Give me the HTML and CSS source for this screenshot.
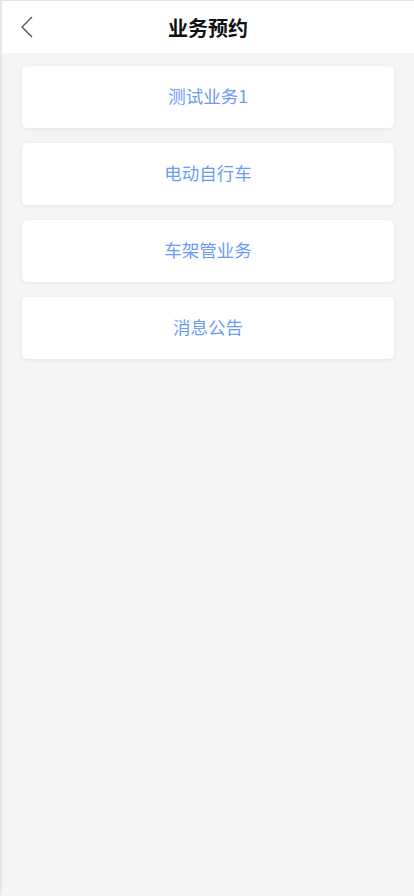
FILE: index.html
```html
<!DOCTYPE html>
<html lang="zh-CN">
<head>
    <meta charset="UTF-8">
    <meta name="viewport" content="width=device-width, initial-scale=1.0">
    <title>业务预约</title>
    <link rel="stylesheet" href="styles.css">
</head>
<body>

    <div class="page">
        <div class="header">
            <span class="back">
                <svg width="14" height="22" viewBox="0 0 14 22">
                    <path d="M12 1 L2 11 L12 21" fill="none" stroke="#555" stroke-width="1.4"/>
                </svg>
            </span>
            <h1>业务预约</h1>
        </div>

        <div class="list">
            <div class="card">测试业务1</div>
            <div class="card">电动自行车</div>
            <div class="card">车架管业务</div>
            <div class="card">消息公告</div>
        </div>
    </div>

</body>
</html>
```

FILE: styles.css
```css
body {
    margin: 0;
    padding: 0;
    font-family: "Noto Sans CJK SC", "Noto Sans", sans-serif;
    background-color: #f5f5f5;
}

.page {
    min-height: 894px;
    border-top: 1px solid #e2e2e2;
    border-left: 2px solid #e6e6e6;
    background-color: #f5f5f5;
}

.header {
    height: 52px;
    background-color: #fff;
    display: flex;
    align-items: center;
    justify-content: center;
    position: relative;
}

.header h1 {
    margin: 0;
    font-size: 20px;
    font-weight: bold;
    color: #111;
}

.back {
    position: absolute;
    left: 18px;
    top: 15px;
    display: flex;
}

.list {
    padding: 13px 20px 0 20px;
    display: flex;
    flex-direction: column;
    gap: 15px;
}

.card {
    height: 62px;
    box-sizing: border-box;
    padding-bottom: 3px;
    background-color: #fff;
    border-radius: 5px;
    box-shadow: 0px 1px 4px rgba(0, 0, 0, 0.08);
    display: flex;
    align-items: center;
    justify-content: center;
    color: #6b9af7;
    font-size: 17.5px;
}
```
